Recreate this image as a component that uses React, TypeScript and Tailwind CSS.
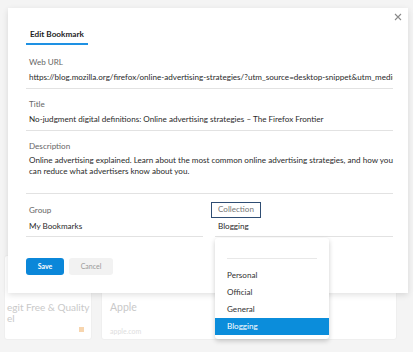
import React from 'react';

type Field = {
  label: string;
  value: string;
};

const fields: Field[] = [
  {
    label: 'Web URL',
    value: 'https://blog.mozilla.org/firefox/online-advertising-strategies/?utm_source=desktop-snippet&utm_medium=snippet&utm_campaign=nov-19',
  },
  {
    label: 'Title',
    value: 'No-judgment digital definitions: Online advertising strategies – The Firefox Frontier',
  },
];

const collections = ['Personal', 'Official', 'General', 'Blogging'];

export default function App() {
  return (
    <div className="relative w-[417px] h-[359px] bg-white overflow-hidden font-['Lato',sans-serif]">
      {/* page behind the modal */}
      <div className="w-[413px] h-[352px] bg-[#f4f4f4] pt-[255px] px-[4px] flex gap-[9px]">
        <div className="w-[88px] h-[85px] bg-white rounded-[3px] border border-[#efefef] overflow-hidden relative">
          <div className="absolute left-[2px] top-[46px] text-[10px] leading-[11px] text-[#c9c9c9] whitespace-nowrap">
            <div>egit Free &amp; Quality</div>
            <div>el</div>
          </div>
          <div className="absolute left-[74px] top-[71px] w-[5px] h-[5px] bg-[#f7d5ae]" />
        </div>
        <div className="w-[296px] h-[85px] bg-white rounded-[3px] border border-[#efefef] relative">
          <div className="absolute left-[8px] top-[46px] text-[10.5px] leading-[11px] text-[#c9c9c9]">Apple</div>
          <div className="absolute left-[8px] top-[71px] text-[7px] leading-[8px] text-[#dedede]">apple.com</div>
        </div>
      </div>

      {/* modal */}
      <div className="absolute left-[8px] top-[8px] w-[400px] h-[285px] bg-white shadow-[0_2px_6px_rgba(0,0,0,0.12)] pl-[18px] pr-[15px]">
        <button className="absolute right-[6px] top-[5px] w-[8px] h-[8px] text-[#8a8a8a]">
          <svg viewBox="0 0 8 8" className="w-[8px] h-[8px]">
            <path d="M1 1L7 7M7 1L1 7" stroke="currentColor" strokeWidth="1.1" />
          </svg>
        </button>

        <div className="flex pt-[20px]">
          <div className="px-[4px] pb-[3px] border-b-2 border-[#1e91e3] text-[8.2px] leading-[12px] font-bold text-[#222]">
            Edit Bookmark
          </div>
        </div>

        <div className="mt-[11px]">
          {fields.map((f, i) => (
            <div key={f.label} className={`border-b border-[#e2e2e2] pb-[5px] ${i > 0 ? 'pt-[9px]' : ''}`}>
              <div className="px-[3px] text-[8.1px] leading-[12px] text-[#666]">{f.label}</div>
              <div className="mt-[3px] pl-[3px] text-[8.1px] leading-[12px] text-[#2a2a2a] whitespace-nowrap overflow-hidden">
                {f.value}
              </div>
            </div>
          ))}

          <div className="border-b border-[#e2e2e2] pt-[9px] pb-[16px]">
            <div className="px-[3px] text-[8.1px] leading-[12px] text-[#666]">Description</div>
            <div className="mt-[3px] pl-[3px] text-[8.1px] leading-[11px] text-[#2a2a2a]">
              Online advertising explained. Learn about the most common online advertising strategies, and how you can reduce what advertisers know about you.
            </div>
          </div>

          <div className="flex gap-[12px] pt-[10px]">
            <div className="w-[177px] border-b border-[#e2e2e2] pb-[4px]">
              <div className="px-[3px] text-[8.1px] leading-[12px] text-[#666]">Group</div>
              <div className="mt-[4px] px-[3px] text-[8.1px] leading-[12px] text-[#2a2a2a]">My Bookmarks</div>
            </div>
            <div className="w-[178px] border-b border-[#e2e2e2] pb-[4px]">
              <div className="flex h-[12px] px-[3px]">
                <span className="-ml-[7px] -mt-[2px] h-[16px] px-[6px] border-[1.5px] border-[#2f4d73] text-[8.1px] leading-[13px] text-[#777]">
                  Collection
                </span>
              </div>
              <div className="mt-[4px] px-[3px] text-[8.1px] leading-[12px] text-[#2a2a2a]">Blogging</div>
            </div>
          </div>

          <div className="flex gap-[5px] mt-[21px]">
            <button className="w-[38px] h-[17px] rounded-[3px] bg-[#0b87d9] text-white text-[7px] font-bold">Save</button>
            <button className="w-[44px] h-[17px] rounded-[3px] bg-[#f2f2f2] text-[#9a9a9a] text-[7px]">Cancel</button>
          </div>
        </div>
      </div>

      {/* collection dropdown */}
      <div className="absolute left-[215px] top-[238px] w-[114px] bg-white rounded-[3px] shadow-[0_2px_5px_rgba(0,0,0,0.2)] pt-[20px] pb-[4px]">
        <div className="mx-[12px] h-px bg-[#e8e8e8]" />
        <div className="mt-[8px]">
          {collections.map((c) => (
            <div
              key={c}
              className={`h-[17px] px-[12px] text-[8.1px] leading-[17px] ${
                c === 'Blogging' ? 'bg-[#0b8ddb] text-white' : 'text-[#333]'
              }`}
            >
              {c}
            </div>
          ))}
        </div>
      </div>
    </div>
  );
}
